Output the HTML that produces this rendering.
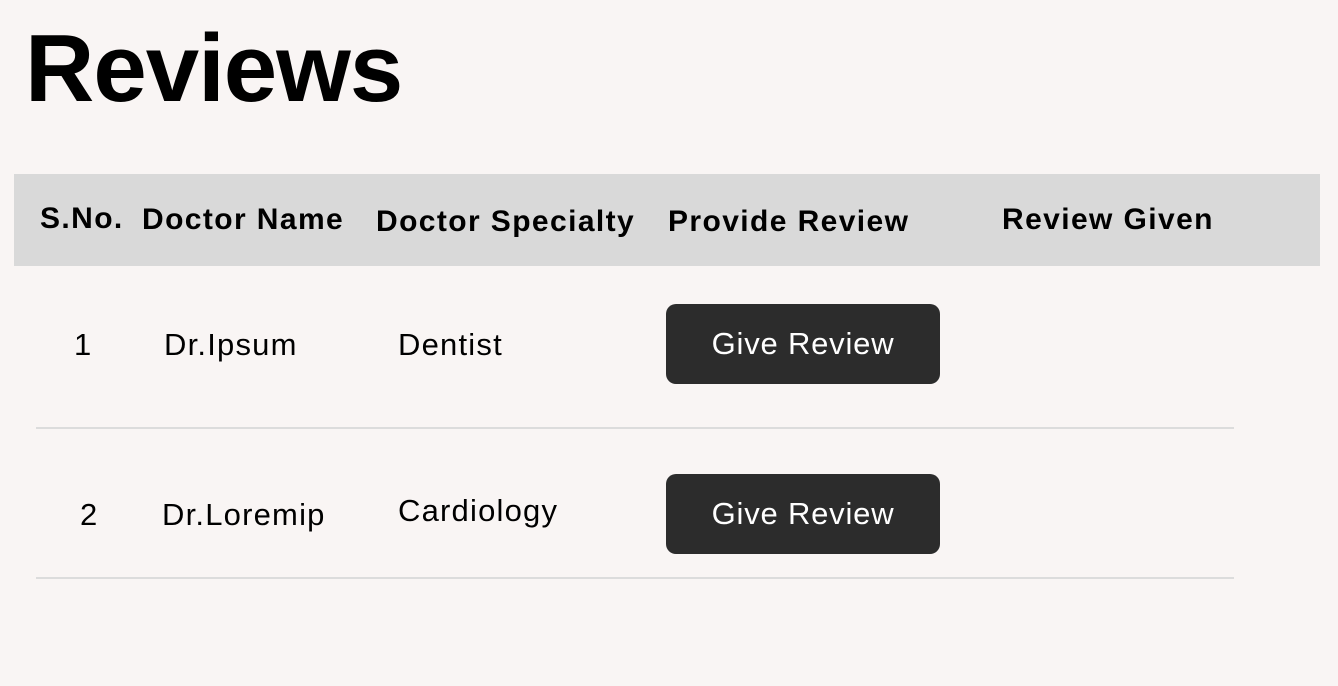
<!DOCTYPE html>
<html><head><style>
body{margin:0;width:1338px;height:686px;background:#f9f5f4;font-family:"Liberation Sans",sans-serif;position:relative;overflow:hidden;color:#000}
.a{position:absolute;white-space:nowrap}
h1{position:absolute;left:25px;top:14px;margin:0;font-size:96px;font-weight:bold;letter-spacing:-1px}
.hdr{position:absolute;left:14px;top:174px;width:1306px;height:92px;background:#d9d9d9}
.h{font-weight:bold;font-size:30px;letter-spacing:1.4px}
.c{font-size:31px;letter-spacing:1.2px}
.btn{position:absolute;left:666px;width:274px;height:80px;background:#2c2c2c;border-radius:10px;color:#fff;font-size:31px;text-align:center;line-height:80px;letter-spacing:0.8px}
.ln{position:absolute;left:36px;width:1198px;height:2px;background:#dcdcdc}
</style></head><body>
<h1>Reviews</h1>
<div class="hdr"></div>
<div class="a h" style="left:40px;top:202px">S.No.</div>
<div class="a h" style="left:142px;top:203px">Doctor Name</div>
<div class="a h" style="left:376px;top:205px">Doctor Specialty</div>
<div class="a h" style="left:668px;top:205px">Provide Review</div>
<div class="a h" style="left:1002px;top:203px">Review Given</div>
<div class="a c" style="left:74px;top:327px">1</div>
<div class="a c" style="left:164px;top:327px">Dr.Ipsum</div>
<div class="a c" style="left:398px;top:327px">Dentist</div>
<div class="btn" style="top:304px">Give Review</div>
<div class="ln" style="top:427px"></div>
<div class="a c" style="left:80px;top:497px">2</div>
<div class="a c" style="left:162px;top:497px">Dr.Loremip</div>
<div class="a c" style="left:398px;top:493px">Cardiology</div>
<div class="btn" style="top:474px">Give Review</div>
<div class="ln" style="top:577px"></div>
</body></html>
